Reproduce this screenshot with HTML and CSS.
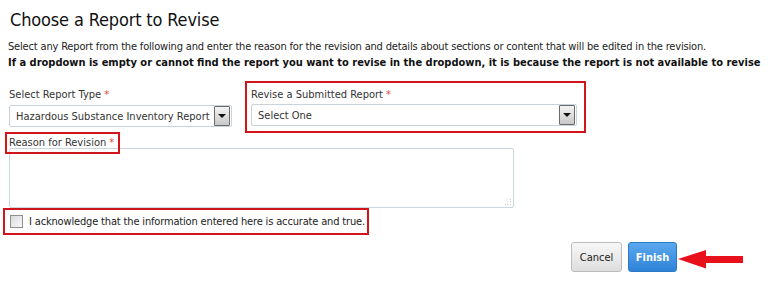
FILE: index.html
```html
<!DOCTYPE html>
<html lang="en">
<head>
<meta charset="utf-8">
<title>Choose a Report to Revise</title>
<link rel="stylesheet" href="styles.css">
</head>
<body>
<div class="page">
  <h1 class="title">Choose a Report to Revise</h1>
  <p class="intro">Select any Report from the following and enter the reason for the revision and details about sections or content that will be edited in the revision.</p>
  <p class="warn">If a dropdown is empty or cannot find the report you want to revise in the dropdown, it is because the report is not available to revise</p>

  <div class="selects">
    <div class="field field-type">
      <label class="label">Select Report Type <span class="req">*</span></label>
      <div class="select select-type">
        <span class="select-text">Hazardous Substance Inventory Report</span>
        <span class="select-btn"><span class="tri"></span></span>
      </div>
    </div>
    <div class="field field-report mark">
      <label class="label">Revise a Submitted Report <span class="req">*</span></label>
      <div class="select select-report">
        <span class="select-text">Select One</span>
        <span class="select-btn"><span class="tri"></span></span>
      </div>
    </div>
  </div>

  <div class="reason-label mark"><label class="label">Reason for Revision <span class="req">*</span></label></div>
  <div class="textarea"><span class="grip"></span></div>

  <div class="ack mark">
    <span class="checkbox"></span>
    <span class="ack-text">I acknowledge that the information entered here is accurate and true.</span>
  </div>

  <div class="actions">
    <button class="btn btn-cancel">Cancel</button>
    <button class="btn btn-finish">Finish</button>
    <svg class="arrow" width="66" height="19" viewBox="0 0 66 19"><polygon points="0,9 28,0 28,6 65,6 65,13 28,13 28,18.5" fill="#e8111b"/></svg>
  </div>
</div>
</body>
</html>
```
FILE: styles.css
```css
* { box-sizing: border-box; }
html, body { margin: 0; padding: 0; background: #fff; }
body { font-family: "DejaVu Sans", Verdana, sans-serif; font-stretch: condensed; color: #222; }
.page { padding: 8px 0 0 8px; width: 781px; height: 285px; overflow: hidden; }
.title { margin: 0 0 0 2px; font-size: 18px; font-weight: normal; color: #111; line-height: 24px; letter-spacing: -0.15px; }
.intro { margin: 7px 0 0 0; font-size: 11px; line-height: 16px; color: #222; letter-spacing: -0.17px; white-space: nowrap; }
.warn { margin: 0; font-size: 11px; font-weight: bold; line-height: 16px; color: #111; white-space: nowrap; }
.selects { display: flex; align-items: flex-start; margin-top: 10px; }
.label { font-size: 11px; color: #333; line-height: 14px; }
.req { color: #e8443a; }
.field-type { padding-top: 2px; margin-left: 1px; }
.field-report { margin-left: 13px; padding: 0 7px 5px 4px; }
.mark { border: 2px solid #d2141b; }
.select { margin-top: 2px; height: 22px; border: 1px solid #c9d3d9; border-radius: 2px; display: flex; align-items: center; justify-content: space-between; padding-left: 6px; background: #fff; }
.select-type { width: 223px; margin-top: 3px; }
.select-report { width: 326px; }
.select-text { font-size: 11px; color: #333; white-space: nowrap; }
.select-btn { flex: none; width: 16px; height: 20px; margin-right: 1px; border: 1px solid #6a6a6a; border-radius: 1px; background: linear-gradient(#f4f4f4, #c8c8c8); display: flex; align-items: center; justify-content: center; }
.tri { width: 0; height: 0; border-left: 4px solid transparent; border-right: 4px solid transparent; border-top: 4px solid #111; }
.reason-label { display: flex; width: max-content; margin: -1px 0 -6px -3px; padding: 2px 4px 2px 2px; position: relative; z-index: 1; }
.textarea { width: 505px; height: 60px; margin-left: 1px; border: 1px solid #c9d6dc; border-radius: 2px; position: relative; }
.grip { position: absolute; right: 2px; bottom: 2px; width: 7px; height: 7px; background: radial-gradient(circle, #999 0.6px, transparent 0.8px) 0 0 / 2.5px 2.5px; clip-path: polygon(100% 0, 100% 100%, 0 100%); }
.ack { display: flex; align-items: center; width: 366px; height: 27px; margin-left: -5px; padding-left: 5px; }
.checkbox { flex: none; width: 13px; height: 13px; border: 1px solid #8f8f8f; background: linear-gradient(135deg, #dcdcdc, #f8f8f8); margin-right: 6px; }
.ack-text { font-size: 11px; color: #222; white-space: nowrap; letter-spacing: -0.16px; }
.actions { display: flex; align-items: center; margin-top: 7px; padding-left: 563px; }
.btn { font-family: "DejaVu Sans", Verdana, sans-serif; font-stretch: condensed; font-size: 11px; border-radius: 3px; height: 30px; cursor: pointer; padding: 0; }
.btn-cancel { width: 51px; border: 1px solid #bcbcbc; background: linear-gradient(#f7f7f7, #dedede); color: #222; }
.btn-finish { width: 49px; margin-left: 6px; border: 1px solid #2b78c6; background: linear-gradient(#5aa8ee, #2f83d8); color: #fff; font-weight: bold; }
.arrow { margin-left: 1px; margin-top: 4px; }
```
